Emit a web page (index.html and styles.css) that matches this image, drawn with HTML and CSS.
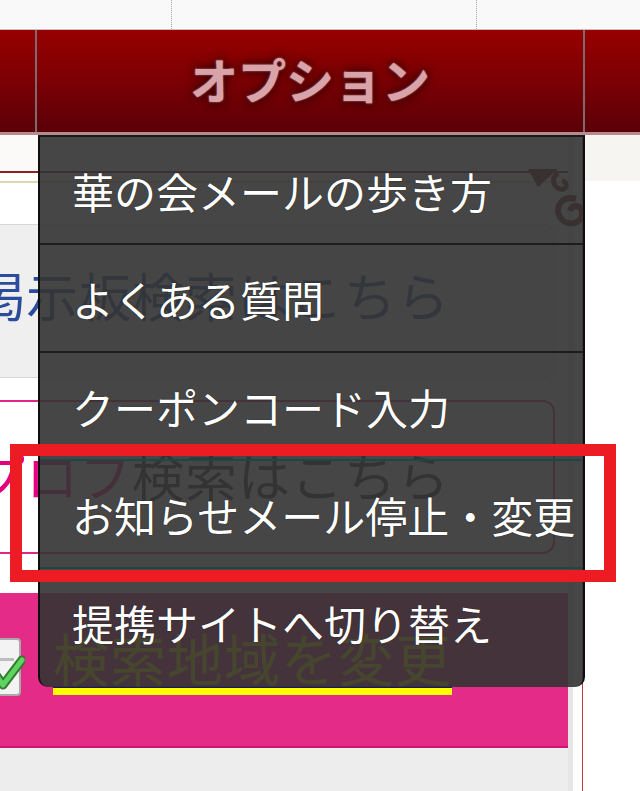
FILE: index.html
```html
<!DOCTYPE html>
<html lang="ja">
<head>
<meta charset="utf-8">
<title>オプション</title>
<link rel="stylesheet" href="styles.css">
</head>
<body>
<div class="page">
  <div class="topstrip">
    <div class="ts-a"></div>
    <div class="ts-b"></div>
    <div class="ts-c"></div>
  </div>
  <nav class="nav">
    <div class="nav-left"></div>
    <div class="nav-tab">オプション</div>
    <div class="nav-right"></div>
  </nav>
  <div class="content">
    <main class="main">
      <div class="band"></div>
      <div class="band2"></div>
      <div class="spacer"></div>
      <a class="btn btn-gray"><span class="btn-text">掲示板検索はこちら</span></a>
      <div class="gap1"></div>
      <a class="btn btn-pink"><span class="btn-text"><span class="mag">プロフ</span>検索はこちら</span></a>
      <div class="gap2"></div>
      <div class="area">
        <svg class="check" width="34" height="58" viewBox="0 0 34 58">
          <rect x="1" y="1" width="28" height="56" rx="3" fill="#f3f3f3" stroke="#a9a9a9" stroke-width="2"/>
          <rect x="5" y="20" width="18" height="3" fill="#bdbdbd"/>
          <path d="M3 34 L12 47 L31 22" fill="none" stroke="#2f7d2f" stroke-width="9" stroke-linecap="round" stroke-linejoin="round"/>
          <path d="M3 34 L12 47 L31 22" fill="none" stroke="#5fd25f" stroke-width="5" stroke-linecap="round" stroke-linejoin="round"/>
        </svg>
        <span class="area-link">検索地域を変更</span>
      </div>
      <div class="bottom-gray"></div>
    </main>
    <div class="gutter"></div>
    <div class="side"><div class="side-top"></div></div>
    <svg class="swirl" width="56" height="64" viewBox="0 0 56 64">
      <path d="M0 0 L30 0 L10 18 Z" fill="#6e0f1c"/>
      <path d="M30 4 C22 10 26 18 32 20 C40 22 40 12 34 12" fill="none" stroke="#6e0f1c" stroke-width="5"/>
      <path d="M48 30 C34 26 26 38 32 48 C38 58 54 56 54 44 C54 36 44 34 42 42" fill="none" stroke="#6e0f1c" stroke-width="6"/>
    </svg>
  </div>
  <ul class="menu">
    <li class="item">華の会メールの歩き方</li>
    <li class="item">よくある質問</li>
    <li class="item item-teal">クーポンコード入力</li>
    <li class="item item-teal">お知らせメール停止・変更</li>
    <li class="item item-last">提携サイトへ切り替え</li>
  </ul>
  <div class="highlight"></div>
</div>
</body>
</html>
```
FILE: styles.css
```css
* { box-sizing: border-box; }
html, body { margin: 0; padding: 0; background: #ffffff; }
body { font-family: "Noto Sans CJK JP", "Noto Sans", sans-serif; }
.page { position: relative; width: 640px; height: 791px; overflow: hidden; background: #ffffff; }

.topstrip { display: flex; height: 30px; background: #faf9fa; border-bottom: 1px solid #cbbfc0; }
.ts-a { width: 172px; border-right: 1px dotted #a8a8a8; }
.ts-b { width: 305px; border-right: 1px dotted #a8a8a8; }
.ts-c { flex: 1; }

.nav { display: flex; height: 105px; background: linear-gradient(to bottom, #970000 0%, #7c0004 50%, #5a0008 100%); border-bottom: 3px solid #b78a8c; }
.nav-left { width: 37px; border-right: 2px solid #7e6a6b; }
.nav-tab { width: 548px; border-right: 2px solid #7e6a6b; display: flex; align-items: center; justify-content: center; padding-bottom: 6px; font-size: 48px; font-weight: 700; color: #d9a3aa; text-shadow: 0 0 2px rgba(230,170,178,0.8), 0 0 8px #3a0006, 0 0 12px #3a0006; }
.nav-right { flex: 1; }

.content { position: relative; display: flex; height: 656px; }
.main { width: 568px; display: flex; flex-direction: column; }
.band { height: 38px; background: #fbfaf8; border-bottom: 2px solid #8d1f24; }
.band2 { height: 10px; border-bottom: 2px solid #ddd5ae; }
.spacer { height: 41px; }

.btn { display: flex; align-items: center; width: 555px; height: 154px; text-decoration: none; font-size: 52px; line-height: 60px; white-space: nowrap; overflow: hidden; border-radius: 0 12px 12px 0; }
.btn-text { margin-left: -27px; letter-spacing: 1px; }
.btn-gray { background: #efefef; border: 1px solid #d6d6d6; border-left: none; color: #2b4b9c; padding-bottom: 12px; }
.btn-pink { background: #ffffff; border: 2px solid #e3248a; border-left: none; color: #2f2f2f; padding-bottom: 4px; }
.mag { color: #e4007f; }
.gap1 { height: 22px; }
.gap2 { height: 39px; }

.area { height: 155px; background: #e32b87; border-bottom: 2px solid #cf1578; display: flex; align-items: flex-start; padding-top: 35px; }
.check { margin-left: -9px; margin-top: 10px; margin-right: 28px; flex: none; }
.area-link { display: inline-block; font-size: 56px; line-height: 58px; height: 67px; letter-spacing: 1px; color: #ffff00; white-space: nowrap; background: linear-gradient(to bottom, transparent 58px, #1b1b5c 58px, #1b1b5c 60px, #ffff00 60px); }
.bottom-gray { flex: 1; background: #ededed; }

.gutter { width: 15px; background: linear-gradient(to right, #e6e6e6 0, #e6e6e6 5px, #ffffff 5px); border-right: 1px solid #c0393b; }
.side { flex: 1; background: #ffffff; }
.side-top { height: 46px; background: #f7f5f1; }

.swirl { position: absolute; left: 528px; top: 34px; }

.menu { position: absolute; left: 38px; top: 135px; width: 547px; margin: 0; padding: 0 0 12px; list-style: none; background: rgba(52,52,52,0.91); border-top: 2px solid #141c1c; border-left: 2px solid #0e0e0e; border-right: 2px solid #0e0e0e; border-radius: 0 0 10px 10px; }
.item { height: 108px; display: flex; align-items: center; padding-left: 32px; border-bottom: 2px solid #1c1c1c; font-size: 42px; color: #ffffff; white-space: nowrap; text-shadow: 0 0 1px #000; }
.item-teal { border-bottom-color: #1e4646; }
.item-last { border-bottom: none; height: 106px; }

.highlight { position: absolute; left: 10px; top: 444px; width: 606px; height: 138px; border: 12px solid #ed1c24; }
```
